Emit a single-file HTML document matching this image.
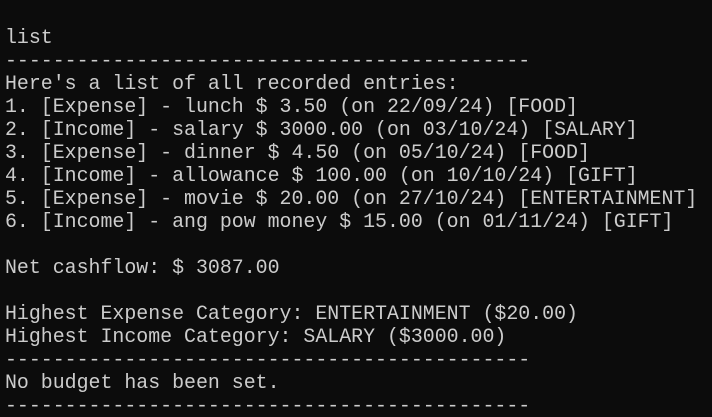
<!DOCTYPE html>
<html><head><meta charset="utf-8"><style>
html,body{margin:0;padding:0;background:#0c0c0c;width:712px;height:412px;overflow:hidden}
pre{margin:0;position:absolute;left:5px;top:26px;font-family:"Liberation Mono",monospace;font-size:19.9px;line-height:23px;color:#cccccc;white-space:pre}
</style></head><body><pre>list
--------------------------------------------
Here's a list of all recorded entries:
1. [Expense] - lunch $ 3.50 (on 22/09/24) [FOOD]
2. [Income] - salary $ 3000.00 (on 03/10/24) [SALARY]
3. [Expense] - dinner $ 4.50 (on 05/10/24) [FOOD]
4. [Income] - allowance $ 100.00 (on 10/10/24) [GIFT]
5. [Expense] - movie $ 20.00 (on 27/10/24) [ENTERTAINMENT]
6. [Income] - ang pow money $ 15.00 (on 01/11/24) [GIFT]

Net cashflow: $ 3087.00

Highest Expense Category: ENTERTAINMENT ($20.00)
Highest Income Category: SALARY ($3000.00)
--------------------------------------------
No budget has been set.
--------------------------------------------</pre></body></html>
